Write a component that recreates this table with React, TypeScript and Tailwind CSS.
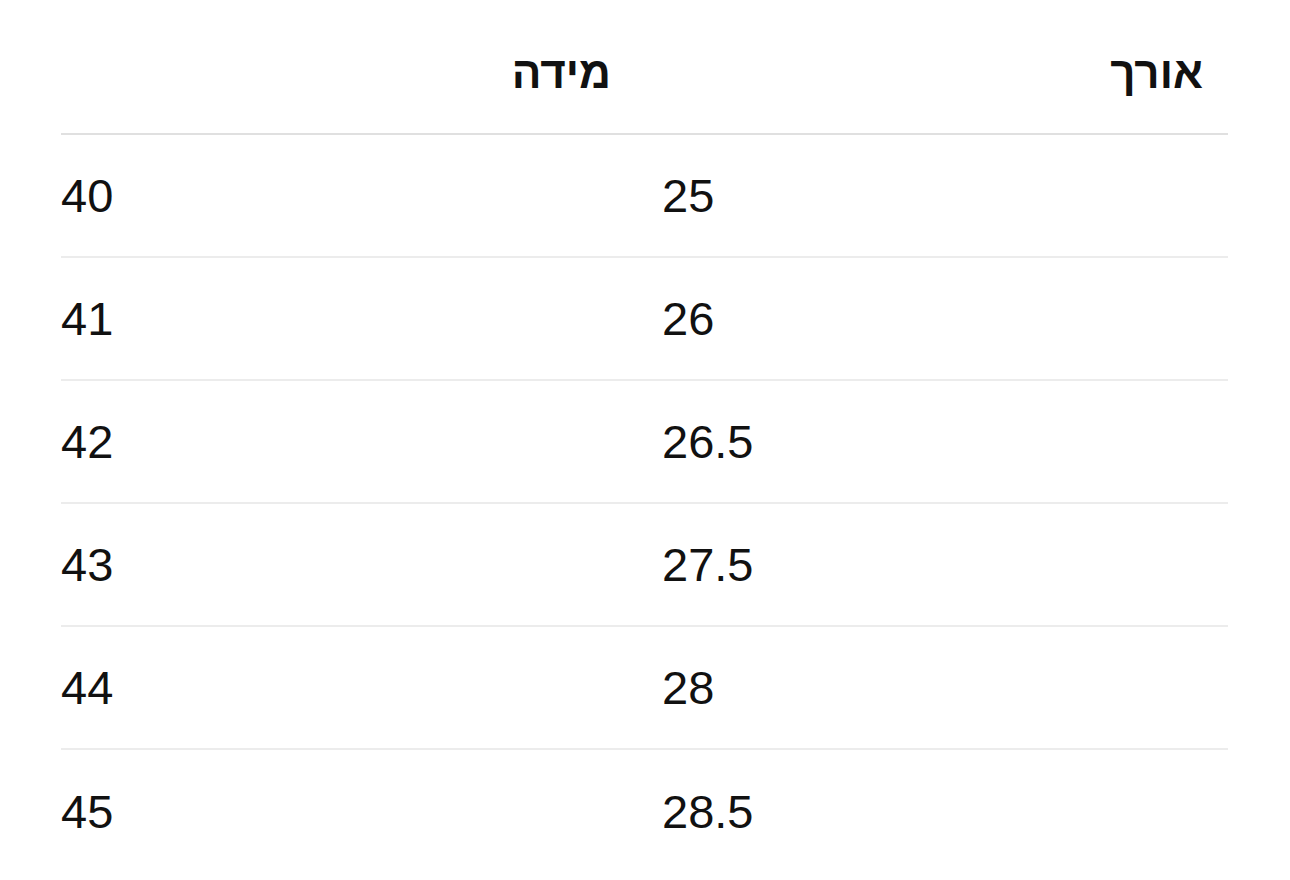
import React from "react";

const rows: [string, string][] = [
  ["40", "25"],
  ["41", "26"],
  ["42", "26.5"],
  ["43", "27.5"],
  ["44", "28"],
  ["45", "28.5"],
];

export default function App() {
  return (
    <div
      className="w-[1290px] h-[880px] bg-white text-[#111111] overflow-hidden"
      style={{ fontFamily: '"Liberation Sans", Arial, sans-serif' }}
    >
      <div className="ml-[61px] mt-[12px] w-[1167px]">
        <div className="grid grid-cols-[601px_566px] h-[123px] border-b-2 border-[#e0e0e0] items-center">
          <div dir="rtl" className="text-[44px] font-bold leading-none">
            <span className="inline-block mr-[51px]">מידה</span>
          </div>
          <div dir="rtl" className="text-[44px] font-bold leading-none">
            <span className="inline-block mr-[25px]">אורך</span>
          </div>
        </div>
        {rows.map(([a, b], i) => (
          <div
            key={a}
            className={
              "grid grid-cols-[601px_566px] h-[123px] items-center " +
              (i < rows.length - 1 ? "border-b-2 border-[#ececec]" : "")
            }
          >
            <div className="text-[47px] leading-none">{a}</div>
            <div className="text-[47px] leading-none">{b}</div>
          </div>
        ))}
      </div>
    </div>
  );
}
